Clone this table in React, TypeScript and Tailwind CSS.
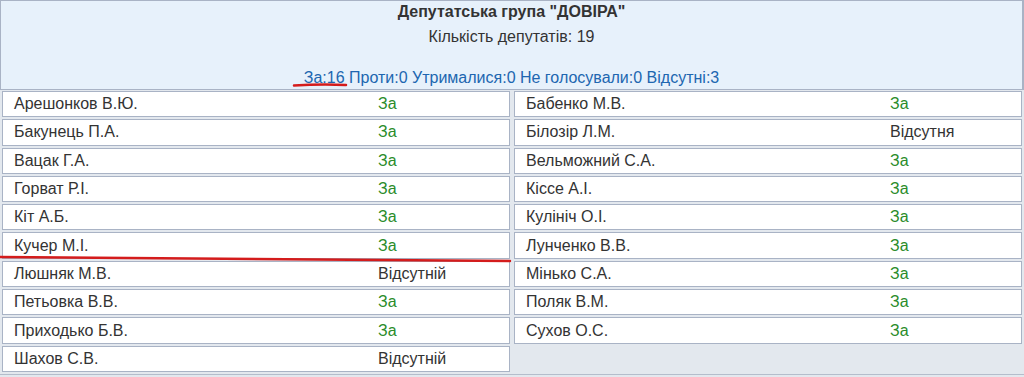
const left: [string, string][] = [
  ['Арешонков В.Ю.', 'За'],
  ['Бакунець П.А.', 'За'],
  ['Вацак Г.А.', 'За'],
  ['Горват Р.І.', 'За'],
  ['Кіт А.Б.', 'За'],
  ['Кучер М.І.', 'За'],
  ['Люшняк М.В.', 'Відсутній'],
  ['Петьовка В.В.', 'За'],
  ['Приходько Б.В.', 'За'],
  ['Шахов С.В.', 'Відсутній'],
]

const right: [string, string][] = [
  ['Бабенко М.В.', 'За'],
  ['Білозір Л.М.', 'Відсутня'],
  ['Вельможний С.А.', 'За'],
  ['Кіссе А.І.', 'За'],
  ['Кулініч О.І.', 'За'],
  ['Лунченко В.В.', 'За'],
  ['Мінько С.А.', 'За'],
  ['Поляк В.М.', 'За'],
  ['Сухов О.С.', 'За'],
]

function Row({ name, vote }: { name: string; vote: string }) {
  return (
    <div className="flex h-[26.3px] items-center border border-[#a9b3c5] bg-white">
      <span className="w-[375px] pl-[11px] text-[#333]">{name}</span>
      <span className={vote === 'За' ? 'text-[#2a8c2a]' : 'text-[#333]'}>{vote}</span>
    </div>
  )
}

export default function App() {
  return (
    <div
      className="relative w-[1024px] h-[377px] overflow-hidden bg-[#e3e8ee] text-[16px]"
      style={{ fontFamily: '"Liberation Sans", Arial, sans-serif' }}
    >
      <div className="h-[90px] border border-r-2 border-[#a9b3c5] bg-[#e7f1fb] text-center text-[#333]">
        <div className="mt-[1px] h-[20px] leading-[20px] font-bold">Депутатська група "ДОВІРА"</div>
        <div className="mt-[5px] h-[20px] leading-[20px]">Кількість депутатів: 19</div>
        <div className="mt-[21px] h-[20px] leading-[20px] text-[#2066b0]">
          За:16 Проти:0 Утрималися:0 Не голосували:0 Відсутні:3
        </div>
      </div>
      <div className="grid grid-cols-2 gap-x-[4px] px-[2px] pt-[1px]">
        <div className="flex flex-col gap-[2px]">
          {left.map(([n, v]) => (
            <Row key={n} name={n} vote={v} />
          ))}
        </div>
        <div className="flex flex-col gap-[2px]">
          {right.map(([n, v]) => (
            <Row key={n} name={n} vote={v} />
          ))}
        </div>
      </div>
      <div className="absolute left-0 right-0 bottom-[2px] h-[1px] bg-[#b4bdcb]" />

      {/* red marker annotations */}
      <svg className="pointer-events-none absolute left-0 top-0" width="1024" height="377">
        <path d="M294 85.5 Q320 84 346 85" stroke="#d41c1c" strokeWidth="2.5" fill="none" strokeLinecap="round" />
        <path d="M0 257 L510 261" stroke="#d41c1c" strokeWidth="2.5" fill="none" strokeLinecap="round" />
      </svg>
    </div>
  )
}
